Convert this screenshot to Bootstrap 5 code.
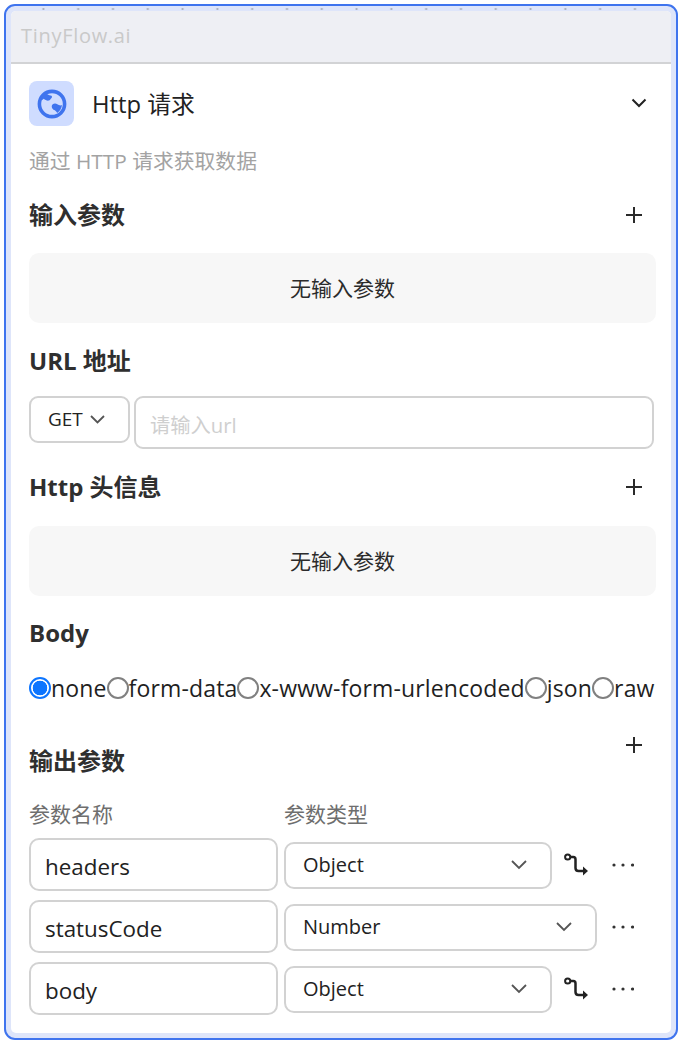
<!DOCTYPE html>
<html lang="zh">
<head>
    <meta charset="UTF-8">
    <meta name="viewport" content="width=device-width, initial-scale=1.0">
    <title>TinyFlow.ai - Http 请求</title>
    <link href="https://cdn.jsdelivr.net/npm/bootstrap@5.3.0/dist/css/bootstrap.min.css" rel="stylesheet">
    <style>
        html, body { height: 100%; }
        body { padding: 4px 3px 3px 4px; background: #fff; color: #222; font-family: "Open Sans", "Noto Sans CJK SC", sans-serif; overflow: hidden; }
        .node-frame { height: 1036px; border: 2px solid #3f74ee; border-radius: 11px; padding: 5px; background: #dee5fa; position: relative; }
        .node-dots { position: absolute; top: 2px; left: 12px; right: 12px; height: 2px; background-image: radial-gradient(circle, #aab0bd 1px, transparent 1.2px); background-size: 34.8px 2px; background-position: 8px 0; }
        .node-inner { height: 100%; background: #fff; border-radius: 5px; overflow: hidden; }
        .node-top { height: 53px; background: #eeeff4; border-bottom: 2px solid #d2d3d5; padding-left: 10px; font-size: 20px; color: #c9c9c9; line-height: 50px; letter-spacing: .7px; }
        .node-body { padding: 17px 16px 0 18px; }
        .logo-box { width: 45px; height: 45px; background: #cfdcff; border-radius: 8px; }
        .node-title { font-size: 23.8px; margin-left: 18px; height: 45px; line-height: 47px; }
        .head-chevron { margin-right: 8px; margin-top: -1px; }
        .node-desc { font-size: 20.8px; color: #a3a3a3; line-height: 28px; margin-top: 21px; }
        .sec-head { height: 34px; font-size: 24px; font-weight: 700; color: #2f2f2f; line-height: 33px; margin-top: 21px; }
        .sec-head > span { margin-top: -2px; }
        .sec-first { margin-top: 23px; }
        .add-btn { margin-right: 12px; }
        .empty-box { height: 70px; background: #f7f7f7; border-radius: 10px; font-size: 21px; color: #2b2b2b; margin-right: -1px; margin-top: 21px; padding-top: 2px; }
        .sec-http + .empty-box { margin-top: 22px; }
        .sec-body { margin-top: 20px; }
        .url-row { margin-top: 18px; }
        .method-pick { width: 101px; height: 47px; border: 2px solid #d2d2d2; border-radius: 9px; font-size: 19px; padding-left: 17px; gap: 7px; }
        .url-input { height: 53px; flex: 1; border: 2px solid #d2d2d2; border-radius: 9px; font-size: 20.3px; color: #cfcfcf; padding-left: 14px; line-height: 55px; margin-left: 4px; margin-right: 1px; }
        .radio-row { font-size: 23px; line-height: 30px; letter-spacing: .15px; color: #1f1f1f; white-space: nowrap; margin-top: 23px; margin-right: -4px; }
        .radio-dot { width: 22px; height: 22px; border-radius: 50%; border: 2px solid #808080; flex: none; }
        .radio-dot.is-on { border-color: #0d75ff; background: radial-gradient(circle, #0d75ff 7px, #fff 7.6px); }
        .out-head { height: 43px; margin-top: 32px; font-size: 24px; font-weight: 700; color: #2f2f2f; line-height: 34px; }
        .out-head svg { margin-top: 1px; }
        .col-heads { font-size: 21px; color: #6e6e6e; line-height: 28px; margin-top: 22px; margin-bottom: 10px; }
        .name-col { width: 255px; }
        .param-row { height: 53px; margin-bottom: 9px; }
        .param-name { width: 249px; height: 53px; border: 2px solid #d2d2d2; border-radius: 10px; font-size: 22.4px; line-height: 53px; padding-left: 14px; margin-right: 6px; flex: none; color: #222; }
        .param-type { height: 47px; margin-top: 1px; border: 2px solid #d2d2d2; border-radius: 10px; font-size: 20px; padding: 0 23px 0 17px; flex: none; }
        .type-obj { width: 268px; }
        .type-num { width: 313px; }
        .map-slot { width: 48px; flex: none; text-align: center; line-height: 0; }
        .more-dots { flex: none; margin-left: 12px; }
        .type-num + .more-dots { margin-left: 15px; }
    </style>
</head>
<body>
    <div class="node-frame">
        <div class="node-dots"></div>
        <div class="node-inner">
            <div class="node-top">TinyFlow.ai</div>
            <div class="node-body">
                <div class="d-flex align-items-center">
                    <div class="logo-box d-flex align-items-center justify-content-center">
                        <svg width="30" height="30" viewBox="0 0 30 30"><circle cx="15" cy="15" r="12.6" fill="none" stroke="#3f74ee" stroke-width="3.6"/><path d="M9 4c1.500 1.600 3 2.300 4.500 2.600 1.600.3 2 1.400 1 2.400-1 1-1.300 2.300-2.800 2.600-1.700.3-3.600-.6-5-1.800-1 1-1.700 1.400-2.300 1.300C5 8 6.800 6 9 4Z" fill="#3f74ee"/><path d="M15.500 15.500c1.600-1.400 3.500-1.200 4.800-.2 1.300 1 2.600 1.400 4.700 1-.5 3.300-2.200 6-4.800 7.800-.8-1.500-1.700-2.300-3-3-1.900-1-3.400-3.700-1.700-5.600Z" fill="#3f74ee"/></svg>
                    </div>
                    <div class="node-title flex-grow-1">Http 请求</div>
                    <svg class="head-chevron" width="16" height="10" viewBox="0 0 16 10"><path d="M1.500 1.500 8 8l6.500-6.500" fill="none" stroke="#222" stroke-width="2"/></svg>
                </div>
                <div class="node-desc">通过 HTTP 请求获取数据</div>

                <div class="sec-head sec-first d-flex justify-content-between align-items-center">
                    <span>输入参数</span>
                    <svg class="add-btn" width="18" height="18" viewBox="0 0 18 18"><path d="M9 1v16M1 9h16" stroke="#2a2a2a" stroke-width="2"/></svg>
                </div>
                <div class="empty-box d-flex align-items-center justify-content-center">无输入参数</div>

                <div class="sec-head">URL 地址</div>
                <div class="d-flex align-items-start url-row">
                    <div class="method-pick d-flex align-items-center">
                        <span>GET</span>
                        <svg width="15" height="9" viewBox="0 0 15 9"><path d="M1 1l6.500 6.500L14 1" fill="none" stroke="#555" stroke-width="1.800"/></svg>
                    </div>
                    <div class="url-input">请输入url</div>
                </div>

                <div class="sec-head sec-http d-flex justify-content-between align-items-center">
                    <span>Http 头信息</span>
                    <svg class="add-btn" width="18" height="18" viewBox="0 0 18 18"><path d="M9 1v16M1 9h16" stroke="#2a2a2a" stroke-width="2"/></svg>
                </div>
                <div class="empty-box d-flex align-items-center justify-content-center">无输入参数</div>

                <div class="sec-head sec-body">Body</div>
                <div class="radio-row d-flex align-items-center">
                    <span class="radio-dot is-on"></span><span>none</span>
                    <span class="radio-dot"></span><span>form-data</span>
                    <span class="radio-dot"></span><span>x-www-form-urlencoded</span>
                    <span class="radio-dot"></span><span>json</span>
                    <span class="radio-dot"></span><span>raw</span>
                </div>

                <div class="out-head d-flex justify-content-between">
                    <span class="align-self-end">输出参数</span>
                    <svg class="add-btn" width="18" height="18" viewBox="0 0 18 18"><path d="M9 1v16M1 9h16" stroke="#2a2a2a" stroke-width="2"/></svg>
                </div>

                <div class="col-heads d-flex">
                    <span class="name-col">参数名称</span>
                    <span>参数类型</span>
                </div>

                <div class="param-row d-flex align-items-center">
                    <div class="param-name">headers</div>
                    <div class="param-type type-obj d-flex align-items-center justify-content-between">
                        <span>Object</span>
                        <svg width="16" height="10" viewBox="0 0 16 10"><path d="M1 1l7 7 7-7" fill="none" stroke="#555" stroke-width="1.800"/></svg>
                    </div>
                    <div class="map-slot">
                        <svg width="26" height="26" viewBox="0 0 26 26"><circle cx="4.700" cy="5" r="2.600" fill="none" stroke="#222" stroke-width="2"/><path d="M7.300 5h3c1.500 0 2.200 1 2.200 2.500v8.500c0 2 1 3 3 3h5" fill="none" stroke="#222" stroke-width="2.500"/><path d="M20 14.500 25 19l-5 4.500z" fill="#222"/></svg>
                    </div>
                    <svg class="more-dots" width="22" height="6" viewBox="0 0 22 6"><circle cx="2" cy="3" r="1.600" fill="#333"/><circle cx="11" cy="3" r="1.600" fill="#333"/><circle cx="20.500" cy="3" r="1.600" fill="#333"/></svg>
                </div>
                <div class="param-row d-flex align-items-center">
                    <div class="param-name">statusCode</div>
                    <div class="param-type type-num d-flex align-items-center justify-content-between">
                        <span>Number</span>
                        <svg width="16" height="10" viewBox="0 0 16 10"><path d="M1 1l7 7 7-7" fill="none" stroke="#555" stroke-width="1.800"/></svg>
                    </div>
                    <svg class="more-dots" width="22" height="6" viewBox="0 0 22 6"><circle cx="2" cy="3" r="1.600" fill="#333"/><circle cx="11" cy="3" r="1.600" fill="#333"/><circle cx="20.500" cy="3" r="1.600" fill="#333"/></svg>
                </div>
                <div class="param-row d-flex align-items-center">
                    <div class="param-name">body</div>
                    <div class="param-type type-obj d-flex align-items-center justify-content-between">
                        <span>Object</span>
                        <svg width="16" height="10" viewBox="0 0 16 10"><path d="M1 1l7 7 7-7" fill="none" stroke="#555" stroke-width="1.800"/></svg>
                    </div>
                    <div class="map-slot">
                        <svg width="26" height="26" viewBox="0 0 26 26"><circle cx="4.700" cy="5" r="2.600" fill="none" stroke="#222" stroke-width="2"/><path d="M7.300 5h3c1.500 0 2.200 1 2.200 2.500v8.500c0 2 1 3 3 3h5" fill="none" stroke="#222" stroke-width="2.500"/><path d="M20 14.500 25 19l-5 4.500z" fill="#222"/></svg>
                    </div>
                    <svg class="more-dots" width="22" height="6" viewBox="0 0 22 6"><circle cx="2" cy="3" r="1.600" fill="#333"/><circle cx="11" cy="3" r="1.600" fill="#333"/><circle cx="20.500" cy="3" r="1.600" fill="#333"/></svg>
                </div>
            </div>
        </div>
    </div>
    <script src="https://cdn.jsdelivr.net/npm/bootstrap@5.3.0/dist/js/bootstrap.bundle.min.js"></script>
</body>
</html>
